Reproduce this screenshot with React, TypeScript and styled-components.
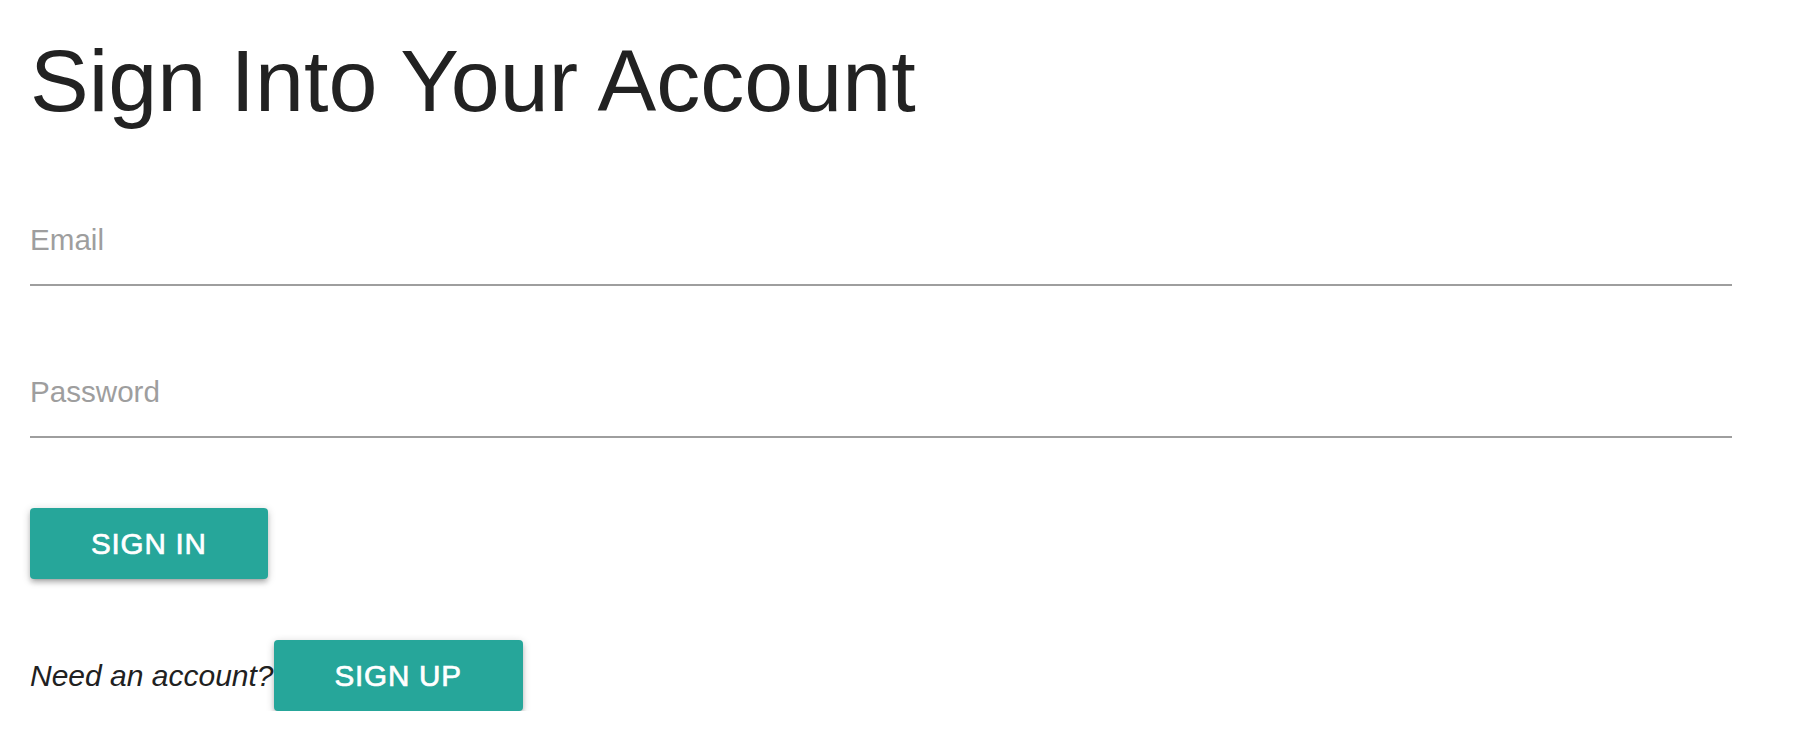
import React from "react";
import styled, { createGlobalStyle } from "styled-components";

const GlobalStyle = createGlobalStyle`
  html, body {
    margin: 0;
    padding: 0;
    background: #ffffff;
  }
  body {
    font-family: "Liberation Sans", Arial, Helvetica, sans-serif;
    color: rgba(0, 0, 0, 0.87);
  }
  * { box-sizing: content-box; }
`;

const Page = styled.main`
  padding: 0 62px 0 30px;
  display: flex;
  flex-direction: column;
`;

const Title = styled.h3`
  margin: 34px 0 0;
  font-family: "Liberation Sans", Arial, Helvetica, sans-serif;
  font-weight: 400;
  font-size: 88px;
  line-height: 94px;
  color: #222222;
`;

const Form = styled.form`
  display: flex;
  flex-direction: column;
  margin-top: 68px;
`;

const Field = styled.div<{ $gap?: number }>`
  margin-top: ${(p) => p.$gap ?? 0}px;
  display: flex;
`;

const Input = styled.input`
  flex: 1;
  height: 88px;
  padding: 0;
  margin: 0;
  border: none;
  border-bottom: 2px solid #9e9e9e;
  outline: none;
  background: transparent;
  font-family: "Liberation Sans", Arial, Helvetica, sans-serif;
  font-size: 29.6px;
  color: rgba(0, 0, 0, 0.87);
  &::placeholder {
    color: #9e9e9e;
    opacity: 1;
  }
`;

const Button = styled.button`
  height: 71px;
  padding: 0 61px;
  margin: 0;
  border: none;
  border-radius: 4px;
  background: #26a69a;
  color: #ffffff;
  font-family: "Liberation Sans", Arial, Helvetica, sans-serif;
  font-weight: 400;
  -webkit-text-stroke: 0.7px #ffffff;
  font-size: 29.6px;
  letter-spacing: 0.8px;
  text-transform: uppercase;
  line-height: 70px;
  cursor: pointer;
  box-shadow: 0 4px 4px 0 rgba(0, 0, 0, 0.14), 0 5px 2px -4px rgba(0, 0, 0, 0.12),
    0 2px 9px 0 rgba(0, 0, 0, 0.2);
`;

const SubmitRow = styled.div`
  margin-top: 70px;
  display: flex;
`;

const SignUpRow = styled.div`
  margin-top: 61px;
  display: flex;
  align-items: baseline;
`;

const Prompt = styled.em`
  font-family: "Liberation Sans", Arial, Helvetica, sans-serif;
  font-style: italic;
  font-size: 30px;
  color: #212121;
`;

export default function App() {
  return (
    <>
      <GlobalStyle />
      <Page>
        <Title>Sign Into Your Account</Title>
        <Form onSubmit={(e) => e.preventDefault()}>
          <Field>
            <Input type="email" placeholder="Email" />
          </Field>
          <Field $gap={62}>
            <Input type="password" placeholder="Password" />
          </Field>
          <SubmitRow>
            <Button type="submit">Sign In</Button>
          </SubmitRow>
        </Form>
        <SignUpRow>
          <Prompt>Need an account?</Prompt>
          <Button type="button">Sign Up</Button>
        </SignUpRow>
      </Page>
    </>
  );
}
